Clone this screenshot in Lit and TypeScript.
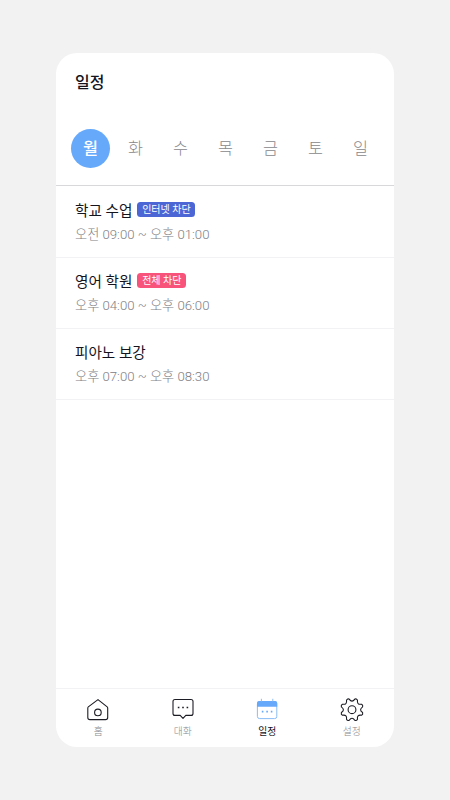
import { LitElement, html, css, svg, nothing } from "lit";
import { customElement } from "lit/decorators.js";
import { classMap } from "lit/directives/class-map.js";

const days = ["월", "화", "수", "목", "금", "토", "일"];

const events = [
  { title: "학교 수업", time: "오전 09:00 ~ 오후 01:00", tag: "인터넷 차단", tone: "blue" },
  { title: "영어 학원", time: "오후 04:00 ~ 오후 06:00", tag: "전체 차단", tone: "red" },
  { title: "피아노 보강", time: "오후 07:00 ~ 오후 08:30", tag: "", tone: "" },
];

// Eight-toothed gear outline around the origin.
const gearPath = (() => {
  const at = (r: number, deg: number) => {
    const a = (deg * Math.PI) / 180;
    return `${(r * Math.sin(a)).toFixed(2)} ${(-r * Math.cos(a)).toFixed(2)}`;
  };
  let d = `M${at(8.6, 0)}`;
  for (let k = 0; k < 8; k++) {
    const b = k * 45;
    d += `Q${at(8.7, b + 9)} ${at(11, b + 15)}Q${at(12.1, b + 22.5)} ${at(11, b + 30)}Q${at(8.7, b + 36)} ${at(8.6, b + 45)}`;
  }
  return d + "Z";
})();

const icons = {
  home: svg`<path d="M13 2.6 L22.2 9.9 Q22.7 10.3 22.7 11 V20.4 Q22.7 22.6 20.5 22.6 H5 Q2.8 22.6 2.8 20.4 V11 Q2.8 10.3 3.3 9.9 Z"/><circle cx="12.9" cy="15.4" r="3.3"/>`,
  chat: svg`<path d="M5 2.5 H21 Q23 2.5 23 4.5 V16.4 Q23 18.4 21 18.4 H15.8 L13 21.4 L10.2 18.4 H5 Q3 18.4 3 16.4 V4.5 Q3 2.5 5 2.5 Z"/><path class="dots" d="M7.8 9.7 h1.6 v1.6 h-1.6z M12.2 9.7 h1.6 v1.6 h-1.6z M16.6 9.7 h1.6 v1.6 h-1.6z"/>`,
  calendar: svg`<rect class="sheet" x="3.4" y="4.6" width="19.4" height="17" rx="2.2"/><path class="head" d="M3 9.8 V6 Q3 4 5 4 H21.2 Q23.2 4 23.2 6 V9.8 Z"/><path class="sheet" d="M7.4 1.8 V5 M18.8 1.8 V5"/><path class="head" d="M7.8 13.8 h1.6 v1.6 h-1.6z M12.3 13.8 h1.6 v1.6 h-1.6z M16.8 13.8 h1.6 v1.6 h-1.6z"/>`,
  gear: svg`<g transform="translate(13 12.7)"><path d="${gearPath}"/><circle r="3.9"/></g>`,
};

const tabs = [
  { label: "홈", icon: icons.home, active: false },
  { label: "대화", icon: icons.chat, active: false },
  { label: "일정", icon: icons.calendar, active: true },
  { label: "설정", icon: icons.gear, active: false },
];

@customElement("app-root")
export class AppRoot extends LitElement {
  static styles = css`
    :host {
      display: block;
      box-sizing: border-box;
      height: 800px;
      padding: 53px 56px;
      background: #f2f2f2;
      font-family: Roboto, "Noto Sans CJK KR", sans-serif;
    }
    .card {
      display: flex;
      flex-direction: column;
      height: 694px;
      border-radius: 21px;
      background: #fff;
      overflow: hidden;
    }
    h1 {
      margin: 0;
      padding: 18px 19px 0;
      font-size: 16px;
      line-height: 24px;
      font-weight: 500;
      color: #14141e;
      height: 58px;
      box-sizing: border-box;
    }
    .days {
      display: flex;
      padding: 18px 11px 17px 12px;
      height: 75px;
      box-sizing: border-box;
      border-bottom: 1px solid #d8d8da;
      margin-bottom: 1px;
    }
    .day {
      flex: 1;
      display: flex;
      justify-content: center;
      font-size: 16.3px;
      line-height: 40px;
      font-weight: 300;
      color: #88888c;
    }
    .day span {
      width: 39px;
      height: 39px;
      border-radius: 50%;
      text-align: center;
      flex: none;
    }
    .on span {
      background: #66a9fb;
      color: #fff;
      font-weight: 500;
    }
    .event {
      height: 71px;
      box-sizing: border-box;
      padding: 11px 19px 0;
      border-bottom: 1px solid #f2f2f4;
    }
    .top {
      display: flex;
      align-items: center;
      gap: 5px;
      height: 23px;
      font-size: 14.6px;
      line-height: 23px;
      color: #14141e;
    }
    .name { padding-top: 3px; }
    .tag {
      height: 15px;
      padding: 0 4.8px;
      border-radius: 3.5px;
      font-size: 10px;
      line-height: 15px;
      color: #fff;
    }
    .blue { background: #4c66d6; }
    .red { background: #f8537a; }
    .time {
      margin-top: 3px;
      font-size: 13.2px;
      line-height: 21px;
      font-weight: 300;
      color: #808084;
      white-space: nowrap;
    }
    nav {
      margin-top: auto;
      display: flex;
      height: 59px;
      box-sizing: border-box;
      border-top: 1px solid #f2f2f4;
      padding-top: 8px;
    }
    .tab {
      flex: 1;
      display: flex;
      flex-direction: column;
      align-items: center;
      font-size: 9.8px;
      line-height: 17px;
      font-weight: 300;
      color: #88888c;
    }
    .tab.current { color: #14141e; font-weight: 400; }
    svg {
      width: 26px;
      height: 26px;
      fill: none;
      stroke: #1c1c24;
      stroke-width: 1.1;
      stroke-linejoin: round;
      overflow: visible;
    }
    .dots { fill: #1c1c24; stroke: none; }
    .sheet { stroke: #7db4f5; stroke-width: 0.9; }
    .head { fill: #66a9fb; stroke: none; }
  `;

  render() {
    return html`
      <main class="card">
        <h1>일정</h1>
        <div class="days">
          ${days.map((d, i) => html`<div class=${classMap({ day: true, on: i === 0 })}><span>${d}</span></div>`)}
        </div>
        ${events.map(
          (e) => html`<section class="event">
            <div class="top">
              <span class="name">${e.title}</span>${e.tag ? html`<span class="tag ${e.tone}">${e.tag}</span>` : nothing}
            </div>
            <div class="time">${e.time}</div>
          </section>`
        )}
        <nav>
          ${tabs.map(
            (t) => html`<div class=${classMap({ tab: true, current: t.active })}>
              <svg viewBox="0 0 26 26">${t.icon}</svg><span>${t.label}</span>
            </div>`
          )}
        </nav>
      </main>
    `;
  }
}
